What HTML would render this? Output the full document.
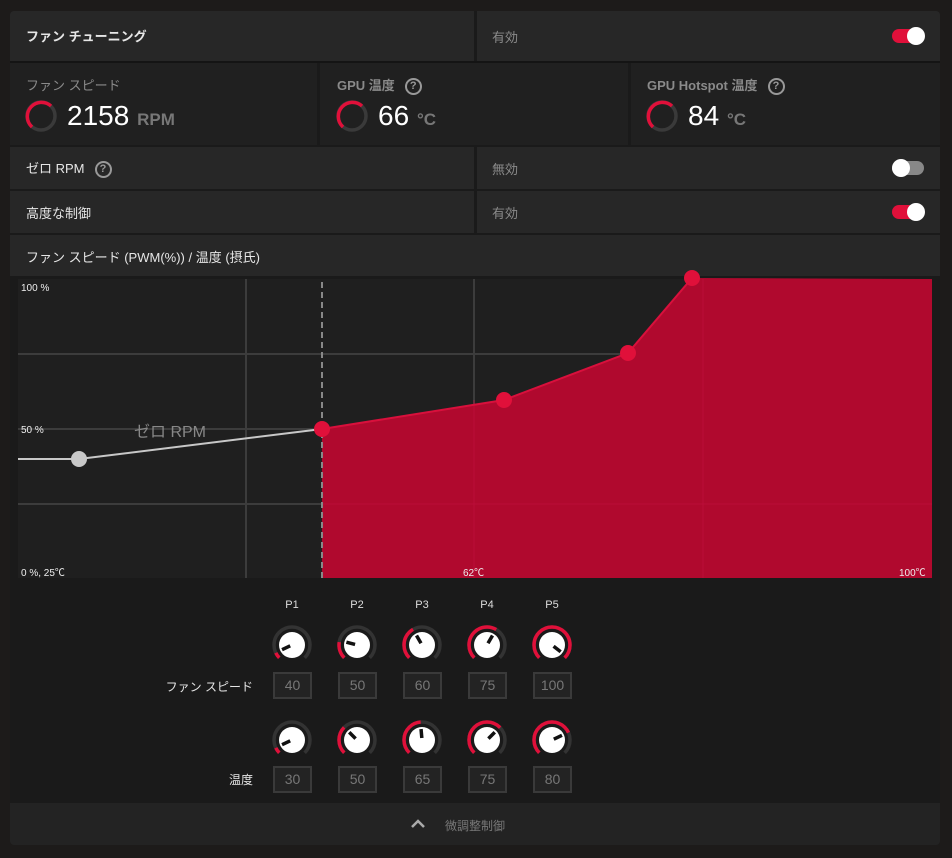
<!DOCTYPE html>
<html><head><meta charset="utf-8"><style>
*{margin:0;padding:0;box-sizing:border-box}
body{width:952px;height:858px;background:#1d1b1a;font-family:"Liberation Sans","Noto Sans CJK JP",sans-serif;position:relative;overflow:hidden;color:#ddd}
.a{position:absolute}
.row{position:absolute;background:#272727}
.t{position:absolute;font-size:13px;color:#e6e6e6}
.g{color:#8a8a8a}
.tog{position:absolute;width:32px;height:14px;border-radius:7px;background:#e0103a}
.tog i{position:absolute;top:-2px;width:18px;height:18px;border-radius:9px;background:#fff}
.q{display:inline-block;width:17px;height:17px;border:2px solid #999;border-radius:50%;color:#999;font-size:11px;font-weight:bold;text-align:center;line-height:13px;vertical-align:middle;margin-left:10px}
.box{position:absolute;width:39px;height:27px;border:2px solid #3a3a3a;background:#232323;color:#777;font-size:14px;text-align:center;line-height:23px}
.pl{position:absolute;font-size:11px;color:#ddd;width:30px;text-align:center}
</style></head><body>
<div class="a" style="left:10px;top:11px;width:930px;height:834px;background:#1a1a1a;border-radius:4px"></div>
<div class="row" style="left:10px;top:11px;width:464px;height:50px;border-radius:4px 0 0 0"></div>
<div class="row" style="left:477px;top:11px;width:463px;height:50px;border-radius:0 4px 0 0"></div>
<div class="t" style="left:26px;top:26px;font-weight:bold">ファン チューニング</div>
<div class="t g" style="left:492px;top:27px">有効</div>
<div class="tog" style="left:892px;top:29px"><i style="left:15px"></i></div>
<div class="a" style="left:10px;top:61px;width:930px;height:2px;background:#141414"></div>
<div class="row" style="left:10px;top:63px;width:307px;height:82px;background:#202020"></div>
<div class="row" style="left:320px;top:63px;width:308px;height:82px;background:#202020"></div>
<div class="row" style="left:631px;top:63px;width:309px;height:82px;background:#202020"></div>
<div class="t g" style="left:26px;top:75px">ファン スピード</div>
<div class="t g" style="left:337px;top:75px;font-weight:bold">GPU 温度<span class="q">?</span></div>
<div class="t g" style="left:647px;top:75px;font-weight:bold">GPU Hotspot 温度<span class="q">?</span></div>
<svg class="a" style="left:0;top:0" width="952" height="150">
<g fill="none" stroke-width="3.5">
<circle cx="41" cy="116" r="14" stroke="#3a3a3a"/><path d="M32 127 A14 14 0 0 1 51 106" stroke="#e0103a"/>
<circle cx="352" cy="116" r="14" stroke="#3a3a3a"/><path d="M343 127 A14 14 0 0 1 362 106" stroke="#e0103a"/>
<circle cx="662" cy="116" r="14" stroke="#3a3a3a"/><path d="M653 127 A14 14 0 0 1 672 106" stroke="#e0103a"/>
</g>
</svg>
<div class="a" style="left:67px;top:100px;font-size:28px;color:#fff">2158 <span style="font-size:17px;color:#777;font-weight:bold">RPM</span></div>
<div class="a" style="left:378px;top:100px;font-size:28px;color:#fff">66 <span style="font-size:17px;color:#777;font-weight:bold">°C</span></div>
<div class="a" style="left:688px;top:100px;font-size:28px;color:#fff">84 <span style="font-size:17px;color:#777;font-weight:bold">°C</span></div>
<div class="row" style="left:10px;top:147px;width:464px;height:42px"></div>
<div class="row" style="left:477px;top:147px;width:463px;height:42px"></div>
<div class="t" style="left:26px;top:158px">ゼロ RPM<span class="q">?</span></div>
<div class="t g" style="left:492px;top:159px">無効</div>
<div class="tog" style="left:892px;top:161px;background:#888"><i style="left:0"></i></div>
<div class="row" style="left:10px;top:191px;width:464px;height:42px"></div>
<div class="row" style="left:477px;top:191px;width:463px;height:42px"></div>
<div class="t" style="left:26px;top:203px">高度な制御</div>
<div class="t g" style="left:492px;top:203px">有効</div>
<div class="tog" style="left:892px;top:205px"><i style="left:15px"></i></div>
<div class="row" style="left:10px;top:235px;width:930px;height:41px"></div>
<div class="t" style="left:26px;top:247px">ファン スピード (PWM(%)) / 温度 (摂氏)</div>
<svg class="a" style="left:0;top:0" width="952" height="600">
<rect x="18" y="279" width="914" height="299" fill="#1f1f1f"/>
<g stroke="#3c3c3c" stroke-width="2">
<line x1="246" y1="279" x2="246" y2="578"/><line x1="474" y1="279" x2="474" y2="578"/><line x1="703" y1="279" x2="703" y2="578"/>
<line x1="18" y1="354" x2="932" y2="354"/><line x1="18" y1="429" x2="932" y2="429"/><line x1="18" y1="504" x2="932" y2="504"/>
</g>
<polygon points="322,429 504,400 628,353 692,278 932,279 932,578 322,578" fill="#b0092e"/>
<g stroke="#c21040" stroke-width="1" opacity=".6"><line x1="474" y1="400" x2="474" y2="578"/><line x1="703" y1="279" x2="703" y2="578"/><line x1="322" y1="504" x2="932" y2="504"/></g>
<polyline points="322,429 504,400 628,353 692,278" fill="none" stroke="#d8103c" stroke-width="2"/>
<line x1="322" y1="282" x2="322" y2="578" stroke="#888" stroke-width="2" stroke-dasharray="6,4"/>
<polyline points="18,459 79,459 322,429" fill="none" stroke="#c8c8c8" stroke-width="2"/>
<circle cx="79" cy="459" r="8" fill="#c8c8c8"/>
<g fill="#e0103a"><circle cx="322" cy="429" r="8"/><circle cx="504" cy="400" r="8"/><circle cx="628" cy="353" r="8"/><circle cx="692" cy="278" r="8"/></g>
<g fill="#eee" font-size="10" font-family="Liberation Sans,Noto Sans CJK JP,sans-serif">
<text x="21" y="291">100 %</text><text x="21" y="433">50 %</text><text x="21" y="576">0 %, 25℃</text><text x="463" y="576">62℃</text><text x="899" y="576">100℃</text></g>
<text x="134" y="437" fill="#888" font-size="16" font-family="Liberation Sans,Noto Sans CJK JP,sans-serif">ゼロ RPM</text>
</svg>
<div class="pl" style="left:277px;top:599px">P1</div><div class="pl" style="left:342px;top:599px">P2</div><div class="pl" style="left:407px;top:599px">P3</div><div class="pl" style="left:472px;top:599px">P4</div><div class="pl" style="left:537px;top:599px">P5</div>
<svg class="a" style="left:0;top:0" width="952" height="800">
<defs>
<g id="kb"><circle r="18" fill="none" stroke="#333" stroke-width="3.5" stroke-dasharray="84.8 200" transform="rotate(135)"/><circle r="13" fill="#fff"/></g>
</defs>
<g transform="translate(292,645)"><use href="#kb"/><circle r="18" fill="none" stroke="#e0103a" stroke-width="3.5" stroke-dasharray="6 200" transform="rotate(135)"/><line x1="2" x2="11" stroke="#111" stroke-width="3.5" transform="rotate(155)"/></g>
<g transform="translate(357,645)"><use href="#kb"/><circle r="18" fill="none" stroke="#e0103a" stroke-width="3.5" stroke-dasharray="17 200" transform="rotate(135)"/><line x1="2" x2="11" stroke="#111" stroke-width="3.5" transform="rotate(195)"/></g>
<g transform="translate(422,645)"><use href="#kb"/><circle r="18" fill="none" stroke="#e0103a" stroke-width="3.5" stroke-dasharray="33 200" transform="rotate(135)"/><line x1="2" x2="11" stroke="#111" stroke-width="3.5" transform="rotate(240)"/></g>
<g transform="translate(487,645)"><use href="#kb"/><circle r="18" fill="none" stroke="#e0103a" stroke-width="3.5" stroke-dasharray="52 200" transform="rotate(135)"/><line x1="2" x2="11" stroke="#111" stroke-width="3.5" transform="rotate(300)"/></g>
<g transform="translate(552,645)"><use href="#kb"/><circle r="18" fill="none" stroke="#e0103a" stroke-width="3.5" stroke-dasharray="84.8 200" transform="rotate(135)"/><line x1="2" x2="11" stroke="#111" stroke-width="3.5" transform="rotate(38)"/></g>
<g transform="translate(292,740)"><use href="#kb"/><circle r="18" fill="none" stroke="#e0103a" stroke-width="3.5" stroke-dasharray="6 200" transform="rotate(135)"/><line x1="2" x2="11" stroke="#111" stroke-width="3.5" transform="rotate(155)"/></g>
<g transform="translate(357,740)"><use href="#kb"/><circle r="18" fill="none" stroke="#e0103a" stroke-width="3.5" stroke-dasharray="28 200" transform="rotate(135)"/><line x1="2" x2="11" stroke="#111" stroke-width="3.5" transform="rotate(225)"/></g>
<g transform="translate(422,740)"><use href="#kb"/><circle r="18" fill="none" stroke="#e0103a" stroke-width="3.5" stroke-dasharray="41 200" transform="rotate(135)"/><line x1="2" x2="11" stroke="#111" stroke-width="3.5" transform="rotate(265)"/></g>
<g transform="translate(487,740)"><use href="#kb"/><circle r="18" fill="none" stroke="#e0103a" stroke-width="3.5" stroke-dasharray="57 200" transform="rotate(135)"/><line x1="2" x2="11" stroke="#111" stroke-width="3.5" transform="rotate(315)"/></g>
<g transform="translate(552,740)"><use href="#kb"/><circle r="18" fill="none" stroke="#e0103a" stroke-width="3.5" stroke-dasharray="63 200" transform="rotate(135)"/><line x1="2" x2="11" stroke="#111" stroke-width="3.5" transform="rotate(335)"/></g>
</svg>
<div class="t" style="left:153px;width:100px;text-align:right;top:678px;font-size:12px">ファン スピード</div>
<div class="t" style="left:153px;width:100px;text-align:right;top:771px;font-size:12px">温度</div>
<div class="box" style="left:273px;top:672px">40</div><div class="box" style="left:338px;top:672px">50</div><div class="box" style="left:403px;top:672px">60</div><div class="box" style="left:468px;top:672px">75</div><div class="box" style="left:533px;top:672px">100</div>
<div class="box" style="left:273px;top:766px">30</div><div class="box" style="left:338px;top:766px">50</div><div class="box" style="left:403px;top:766px">65</div><div class="box" style="left:468px;top:766px">75</div><div class="box" style="left:533px;top:766px">80</div>
<div class="a" style="left:10px;top:803px;width:930px;height:42px;background:#232323;border-radius:0 0 4px 4px"></div>
<svg class="a" style="left:410px;top:818px" width="16" height="12"><polyline points="2,9 8,3 14,9" fill="none" stroke="#aaa" stroke-width="2.5"/></svg>
<div class="t" style="left:445px;top:817px;font-size:12px;color:#777">微調整制御</div>
</body></html>
